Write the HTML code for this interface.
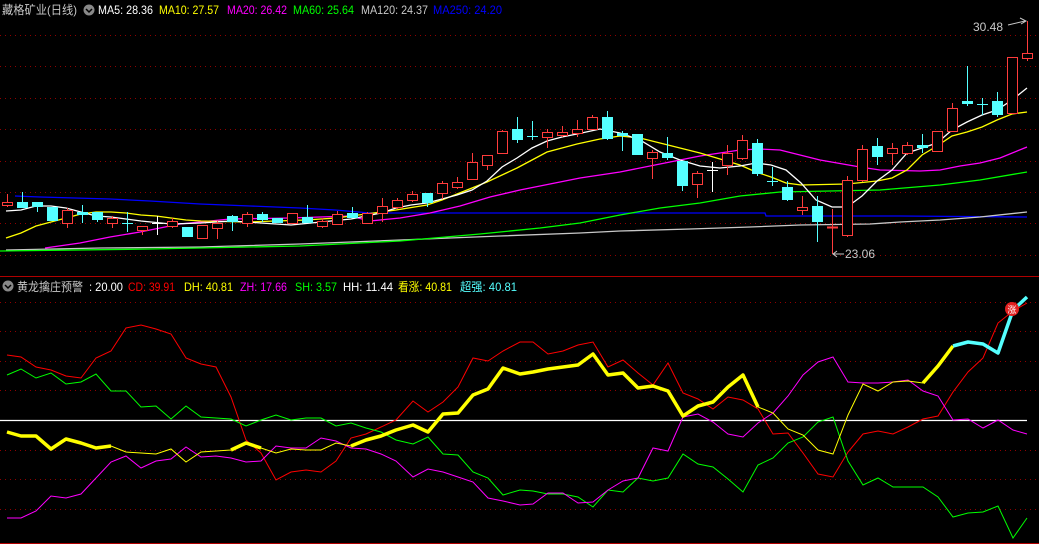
<!DOCTYPE html>
<html><head><meta charset="utf-8"><style>
html,body{margin:0;padding:0;background:#000;width:1039px;height:544px;overflow:hidden}
svg{display:block}
text{font-family:"Liberation Sans","Noto Sans CJK SC",sans-serif;font-size:12px}
</style></head><body>
<svg width="1039" height="544" viewBox="0 0 1039 544" xmlns="http://www.w3.org/2000/svg">
<rect width="1039" height="544" fill="#000"/>
<g stroke="#900000" stroke-width="1" stroke-dasharray="1,4">
<line x1="0" y1="35.5" x2="1039" y2="35.5"/><line x1="0" y1="66.5" x2="1039" y2="66.5"/>
<line x1="0" y1="98.5" x2="1039" y2="98.5"/><line x1="0" y1="129.5" x2="1039" y2="129.5"/>
<line x1="0" y1="161.5" x2="1039" y2="161.5"/><line x1="0" y1="192.5" x2="1039" y2="192.5"/>
<line x1="0" y1="223.5" x2="1039" y2="223.5"/><line x1="0" y1="255.5" x2="1039" y2="255.5"/>
<line x1="0" y1="302.5" x2="1039" y2="302.5"/><line x1="0" y1="331.5" x2="1039" y2="331.5"/>
<line x1="0" y1="361.5" x2="1039" y2="361.5"/><line x1="0" y1="390.5" x2="1039" y2="390.5"/>
<line x1="0" y1="450.5" x2="1039" y2="450.5"/><line x1="0" y1="479.5" x2="1039" y2="479.5"/>
<line x1="0" y1="509.5" x2="1039" y2="509.5"/>
</g>
<line x1="0" y1="276.5" x2="1039" y2="276.5" stroke="#b00000"/>
<line x1="0" y1="543.5" x2="1039" y2="543.5" stroke="#b00000"/>

<g fill="none" stroke-width="1.3">
<polyline stroke="#0000ff" points="15,196 40,197 75,198 110,199 150,201 200,204 250,206 300,208 335,210 370,213 765,213 766,216 900,216 1027,217"/>
<polyline stroke="#c8c8c8" points="6,250 100,248 200,247 300,244 400,240 500,236 580,233 620,231 690,229 750,227 800,225 870,224 900,222 940,220 980,217 1027,212"/>
<polyline stroke="#00ff00" points="0,251 150,249 300,246 400,241 480,234 540,228 580,223 620,215 660,208 700,203 740,196 780,192 880,190 940,185 980,180 1027,172"/>
<polyline stroke="#ff00ff" points="45,248 80,243 110,237 140,232 160,228 180,224 200,222 230,219 290,218 320,217 350,216 370,221 400,218 430,213 460,206 490,197 520,190 550,184 580,178 620,172 660,164 700,156 740,150 760,149 780,150 800,155 820,160 860,167 880,170 920,171 940,170 960,166 980,163 1000,158 1027,147"/>
<polyline stroke="#ffff00" points="6,238 21,233 36,226 51,222 66,218 81,214 96,212 111,212 126,213 141,215 156,216 171,218 186,220 201,221 246,222 306,220 336,218 366,214 396,210 427,205 442,200 457,194 472,188 487,182 502,175 517,168 532,160 547,152 562,148 577,144 600,139 620,136 640,138 660,143 680,148 700,153 720,159 740,165 756,172 771,177 786,183 801,185 847,184 877,181 892,178 907,170 922,155 937,146 952,136 967,132 982,127 997,120 1012,114 1027,112"/>
<polyline stroke="#ffffff" points="6,211 21,210 36,206 51,206 66,208 81,212 96,216 111,217 126,219 141,221 171,224 201,223 231,221 261,223 291,225 321,222 351,219 381,213 396,208 411,205 427,203 442,199 457,195 472,190 487,181 502,167 517,158 532,148 547,141 562,137 577,134 600,129 620,133 640,140 660,152 680,160 700,166 720,168 740,166 756,163 771,165 786,170 801,183 816,200 832,207 847,207 862,196 877,181 892,170 907,153 922,148 937,143 952,130 967,122 982,115 997,110 1012,100 1027,88"/>
</g>

<g stroke-width="1">
<g stroke="#ff3c3c" fill="#000">
<line x1="7.5" y1="194" x2="7.5" y2="207"/><rect x="2.5" y="202.5" width="10" height="3"/>
<line x1="67.5" y1="208" x2="67.5" y2="228"/><rect x="62.5" y="210.5" width="10" height="13"/>
<line x1="112.5" y1="216" x2="112.5" y2="228"/><rect x="107.5" y="218.5" width="10" height="5"/>
<line x1="142.5" y1="226" x2="142.5" y2="235"/><rect x="137.5" y="226.5" width="10" height="4"/>
<line x1="172.5" y1="218" x2="172.5" y2="228"/><rect x="167.5" y="221.5" width="10" height="5"/>
<line x1="202.5" y1="225" x2="202.5" y2="238"/><rect x="197.5" y="225.5" width="10" height="13"/>
<line x1="217.5" y1="221" x2="217.5" y2="239"/><rect x="212.5" y="223.5" width="10" height="5"/>
<line x1="247.5" y1="212" x2="247.5" y2="227"/><rect x="242.5" y="214.5" width="10" height="9"/>
<rect x="287.5" y="213.5" width="10" height="10"/>
<line x1="322.5" y1="218" x2="322.5" y2="228"/><rect x="317.5" y="221.5" width="10" height="5"/>
<line x1="337.5" y1="211" x2="337.5" y2="224"/><rect x="332.5" y="214.5" width="10" height="10"/>
<line x1="367.5" y1="212" x2="367.5" y2="224"/><rect x="362.5" y="213.5" width="10" height="10"/>
<line x1="382.5" y1="198" x2="382.5" y2="222"/><rect x="377.5" y="206.5" width="10" height="7"/>
<line x1="397.5" y1="198" x2="397.5" y2="209"/><rect x="392.5" y="200.5" width="10" height="7"/>
<line x1="412.5" y1="191" x2="412.5" y2="202"/><rect x="407.5" y="194.5" width="10" height="6"/>
<line x1="442.5" y1="181" x2="442.5" y2="199"/><rect x="437.5" y="183.5" width="10" height="10"/>
<line x1="457.5" y1="177" x2="457.5" y2="189"/><rect x="452.5" y="182.5" width="10" height="5"/>
<line x1="472.5" y1="153" x2="472.5" y2="180"/><rect x="467.5" y="162.5" width="10" height="17"/>
<line x1="487.5" y1="155" x2="487.5" y2="170"/><rect x="482.5" y="155.5" width="10" height="10"/>
<line x1="502.5" y1="130" x2="502.5" y2="154"/><rect x="497.5" y="131.5" width="10" height="22"/>
<line x1="547.5" y1="129" x2="547.5" y2="148"/><rect x="542.5" y="132.5" width="10" height="5"/>
<line x1="562.5" y1="126" x2="562.5" y2="137"/><rect x="557.5" y="132.5" width="10" height="3"/>
<line x1="577.5" y1="120" x2="577.5" y2="137"/><rect x="572.5" y="129.5" width="10" height="4"/>
<line x1="592.5" y1="115" x2="592.5" y2="130"/><rect x="587.5" y="117.5" width="10" height="12"/>
<line x1="652.5" y1="150" x2="652.5" y2="179"/><rect x="647.5" y="152.5" width="10" height="6"/>
<line x1="697.5" y1="171" x2="697.5" y2="198"/><rect x="692.5" y="173.5" width="10" height="11"/>
<line x1="727.5" y1="145" x2="727.5" y2="175"/><rect x="722.5" y="153.5" width="10" height="12"/>
<line x1="742.5" y1="135" x2="742.5" y2="160"/><rect x="737.5" y="140.5" width="10" height="18"/>
<line x1="802.5" y1="196" x2="802.5" y2="215"/><rect x="797.5" y="207.5" width="10" height="3"/>
<line x1="832.5" y1="209" x2="832.5" y2="254"/><line x1="827" y1="227.5" x2="838" y2="227.5" stroke-width="2"/>
<line x1="847.5" y1="176" x2="847.5" y2="237"/><rect x="842.5" y="180.5" width="10" height="55"/>
<line x1="862.5" y1="145" x2="862.5" y2="182"/><rect x="857.5" y="149.5" width="10" height="31"/>
<line x1="892.5" y1="143" x2="892.5" y2="165"/><rect x="887.5" y="148.5" width="10" height="5"/>
<line x1="907.5" y1="142" x2="907.5" y2="155"/><rect x="902.5" y="145.5" width="10" height="8"/>
<rect x="932.5" y="131.5" width="10" height="20"/>
<line x1="952.5" y1="103" x2="952.5" y2="131"/><rect x="947.5" y="108.5" width="10" height="23"/>
<rect x="1007.5" y="57.5" width="10" height="56"/>
<line x1="1027.5" y1="21" x2="1027.5" y2="61"/><rect x="1022.5" y="53.5" width="10" height="5"/>
</g>
<g stroke="#55ffff" fill="#55ffff">
<line x1="22.5" y1="192" x2="22.5" y2="208"/><rect x="17.5" y="202.5" width="10" height="5"/>
<line x1="37.5" y1="202" x2="37.5" y2="212"/><rect x="32.5" y="202.5" width="10" height="4"/>
<rect x="47.5" y="207.5" width="10" height="13"/>
<line x1="82.5" y1="205" x2="82.5" y2="223"/><rect x="77.5" y="212.5" width="10" height="2"/>
<line x1="97.5" y1="212" x2="97.5" y2="222"/><rect x="92.5" y="212.5" width="10" height="7"/>
<line x1="127.5" y1="212" x2="127.5" y2="232"/><line x1="122" y1="223.5" x2="133" y2="223.5"/>
<rect x="182.5" y="227.5" width="10" height="9"/>
<line x1="232.5" y1="215" x2="232.5" y2="231"/><rect x="227.5" y="216.5" width="10" height="5"/>
<line x1="262.5" y1="212" x2="262.5" y2="222"/><rect x="257.5" y="214.5" width="10" height="5"/>
<rect x="272.5" y="218.5" width="10" height="4"/>
<line x1="307.5" y1="205" x2="307.5" y2="223"/><rect x="302.5" y="217.5" width="10" height="5"/>
<line x1="352.5" y1="207" x2="352.5" y2="218"/><rect x="347.5" y="213.5" width="10" height="4"/>
<line x1="427.5" y1="193" x2="427.5" y2="207"/><rect x="422.5" y="193.5" width="10" height="9"/>
<line x1="517.5" y1="117" x2="517.5" y2="143"/><rect x="512.5" y="129.5" width="10" height="10"/>
<line x1="532.5" y1="121" x2="532.5" y2="140"/><line x1="527" y1="136.5" x2="538" y2="136.5"/>
<line x1="607.5" y1="111" x2="607.5" y2="140"/><rect x="602.5" y="117.5" width="10" height="21"/>
<line x1="622.5" y1="131" x2="622.5" y2="151"/><rect x="617.5" y="133.5" width="10" height="2"/>
<rect x="632.5" y="134.5" width="10" height="20"/>
<line x1="667.5" y1="137" x2="667.5" y2="160"/><rect x="662.5" y="153.5" width="10" height="4"/>
<line x1="682.5" y1="161" x2="682.5" y2="191"/><rect x="677.5" y="161.5" width="10" height="24"/>
<line x1="757.5" y1="139" x2="757.5" y2="176"/><rect x="752.5" y="143.5" width="10" height="30"/>
<line x1="772.5" y1="167" x2="772.5" y2="186"/><line x1="767" y1="181.5" x2="778" y2="181.5"/>
<line x1="787.5" y1="181" x2="787.5" y2="201"/><rect x="782.5" y="187.5" width="10" height="12"/>
<line x1="817.5" y1="196" x2="817.5" y2="242"/><rect x="812.5" y="206.5" width="10" height="15"/>
<line x1="877.5" y1="138" x2="877.5" y2="165"/><rect x="872.5" y="146.5" width="10" height="10"/>
<line x1="922.5" y1="134" x2="922.5" y2="153"/><rect x="917.5" y="145.5" width="10" height="2"/>
<line x1="967.5" y1="66" x2="967.5" y2="106"/><rect x="962.5" y="101.5" width="10" height="2"/>
<line x1="982.5" y1="98" x2="982.5" y2="115"/><line x1="977" y1="104.5" x2="988" y2="104.5"/>
<line x1="997.5" y1="92" x2="997.5" y2="117"/><rect x="992.5" y="101.5" width="10" height="13"/>
</g>
<g stroke="#fff">
<line x1="157.5" y1="216" x2="157.5" y2="235"/><line x1="152" y1="223.5" x2="163" y2="223.5"/>
<line x1="712.5" y1="162" x2="712.5" y2="192"/><line x1="707" y1="170.5" x2="718" y2="170.5"/>
</g>
</g>

<text x="973" y="31" fill="#c8c8c8">30.48</text>
<polyline points="1008,25 1025,21" stroke="#c8c8c8" fill="none"/><polyline points="1020,18 1026,21 1021,24" stroke="#c8c8c8" fill="none"/>
<text x="845" y="258" fill="#c8c8c8">23.06</text>
<line x1="833" y1="254" x2="844" y2="254" stroke="#c8c8c8"/><polyline points="837,251 833,254 837,257" stroke="#c8c8c8" fill="none"/>

<g lengthAdjust="spacingAndGlyphs">
<text x="2" y="14" fill="#c8c8c8" textLength="75" lengthAdjust="spacingAndGlyphs">藏格矿业(日线)</text>
<text x="98" y="14" fill="#ffffff" textLength="55" lengthAdjust="spacingAndGlyphs">MA5: 28.36</text>
<text x="159" y="14" fill="#ffff00" textLength="60" lengthAdjust="spacingAndGlyphs">MA10: 27.57</text>
<text x="227" y="14" fill="#ff00ff" textLength="60" lengthAdjust="spacingAndGlyphs">MA20: 26.42</text>
<text x="293" y="14" fill="#00ff00" textLength="61" lengthAdjust="spacingAndGlyphs">MA60: 25.64</text>
<text x="361" y="14" fill="#c8c8c8" textLength="67" lengthAdjust="spacingAndGlyphs">MA120: 24.37</text>
<text x="433" y="14" fill="#0000ff" textLength="69" lengthAdjust="spacingAndGlyphs">MA250: 24.20</text>

<text x="17" y="291" fill="#c8c8c8" textLength="66" lengthAdjust="spacingAndGlyphs">黄龙擒庄预警</text>
<text x="89" y="291" fill="#fff" textLength="34" lengthAdjust="spacingAndGlyphs">: 20.00</text>
<text x="128" y="291" fill="#ff0000" textLength="47" lengthAdjust="spacingAndGlyphs">CD: 39.91</text>
<text x="184" y="291" fill="#ffff00" textLength="49" lengthAdjust="spacingAndGlyphs">DH: 40.81</text>
<text x="240" y="291" fill="#ff00ff" textLength="47" lengthAdjust="spacingAndGlyphs">ZH: 17.66</text>
<text x="295" y="291" fill="#00ff00" textLength="42" lengthAdjust="spacingAndGlyphs">SH: 3.57</text>
<text x="343" y="291" fill="#fff" textLength="50" lengthAdjust="spacingAndGlyphs">HH: 11.44</text>
<text x="398" y="291" fill="#ffff00" textLength="54" lengthAdjust="spacingAndGlyphs">看涨: 40.81</text>
<text x="460" y="291" fill="#55ffff" textLength="57" lengthAdjust="spacingAndGlyphs">超强: 40.81</text>
</g>
<circle cx="89" cy="10" r="5.5" fill="#888"/><polyline points="86,9 89,12 92,9" stroke="#000" stroke-width="1.5" fill="none"/>
<circle cx="8" cy="286" r="5.5" fill="#888"/><polyline points="5,285 8,288 11,285" stroke="#000" stroke-width="1.5" fill="none"/>

<line x1="0" y1="420.5" x2="1027" y2="420.5" stroke="#fff" stroke-width="1.2"/>
<g fill="none" stroke-width="1">
<polyline stroke="#ff0000" points="7,355 21,357 36,367 51,370 66,376 81,378 96,358 111,351 126,328 141,325 156,329 171,334 186,358 201,364 216,367 231,397 246,440 261,453 276,480 291,472 306,470 321,472 336,461 351,438 366,434 381,427 396,420 413,401 428,412 443,402 458,387 473,358 488,361 503,351 520,342 533,342 548,354 563,351 578,345 593,342 608,367 623,360 638,373 653,385 668,363 683,393 698,399 713,409 728,397 743,400 758,409 773,434 788,433 803,453 818,474 833,477 848,452 863,434 878,431 893,434 908,427 923,419 938,416 953,392 968,372 983,358 998,323 1013,311 1027,303"/>
<polyline stroke="#00ff00" points="7,375 21,369 36,378 51,373 66,384 81,382 96,374 111,391 126,391 141,407 156,406 171,419 186,406 201,417 216,418 231,419 246,426 261,420 276,415 291,420 306,418 321,418 336,426 351,423 366,428 381,432 396,440 413,444 428,437 443,454 458,455 473,472 488,478 503,495 520,490 533,491 548,494 563,494 578,497 593,507 608,490 623,492 638,478 653,481 668,478 683,454 698,464 713,467 728,479 743,492 758,465 773,458 788,443 803,437 818,422 833,417 848,461 863,485 878,478 893,487 923,487 938,497 953,517 968,513 983,512 998,506 1013,538 1027,518"/>
<polyline stroke="#ff00ff" points="7,518 21,518 36,511 51,496 66,498 81,494 96,478 111,462 126,456 141,468 156,461 171,459 186,447 201,457 216,456 231,458 246,462 261,461 276,446 291,448 306,448 321,438 336,441 351,448 366,449 381,454 396,461 413,477 428,469 443,472 458,477 473,482 488,498 503,501 520,505 533,504 548,493 563,493 578,503 593,502 608,490 623,481 638,478 653,448 668,451 683,417 698,414 713,422 728,434 743,437 758,423 773,413 788,396 803,375 818,362 833,357 848,382 863,383 878,383 893,382 908,380 923,391 938,396 953,420 968,419 983,428 998,420 1013,430 1027,434"/>
<polyline stroke="#ffff00" points="7,432 21,436 36,436 51,449 66,439 81,443 96,448 111,446 126,452 141,453 156,454 171,449 186,462 201,452 216,451 231,450 246,443 261,448 276,453 291,449 306,450 321,450 336,443 351,446 366,440 381,436 396,430 413,425 428,432 443,414 458,413 473,395 488,389 503,368 520,374 533,372 548,369 563,367 578,365 593,354 608,375 623,373 638,388 653,386 668,391 683,416 698,406 713,402 728,387 743,375 758,407 773,413 788,429 803,435 818,450 833,454 848,415 863,384 878,391 893,382 908,381 923,383 938,366 953,346"/>
</g>
<g fill="none" stroke="#ffff00" stroke-width="3.5" stroke-linejoin="round">
<polyline points="7,432 21,436 36,436 51,449 66,439 81,443 96,448 111,446"/>
<polyline points="231,450 246,443 261,448"/>
<polyline points="351,446 366,440 381,436 396,430 413,425 428,432 443,414 458,413 473,395 488,389 503,368 520,374 533,372 548,369 563,367 578,365 593,354 608,375 623,373 638,388 653,386 668,391 683,416 698,406 713,402 728,387 743,375 758,407"/>
<polyline points="923,383 938,366 953,346"/>
</g>
<polyline fill="none" stroke="#55ffff" stroke-width="3.5" stroke-linejoin="round" points="953,346 968,342 983,344 998,353 1013,310 1027,297"/>
<circle cx="1012" cy="309" r="7" fill="#e02020"/>
<text x="1012" y="313" fill="#fff" text-anchor="middle" style="font-size:9px">涨</text>
</svg>
</body></html>
